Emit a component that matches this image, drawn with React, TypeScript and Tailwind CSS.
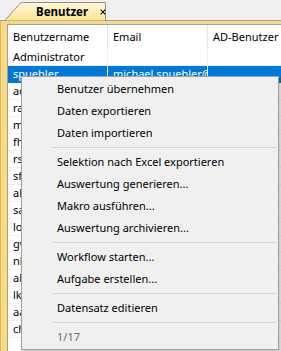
import React from 'react';

const rows = [
  { user: 'Administrator', email: '', ad: '' },
  { user: 'spuehler', email: 'michael.spuehler@firma.ch', ad: '' },
  { user: 'adoerig', email: 'andrea.doerig@firma.ch', ad: '' },
  { user: 'rarnold', email: 'ruth.arnold@firma.ch', ad: '' },
  { user: 'mmueller', email: 'marc.mueller@firma.ch', ad: '' },
  { user: 'fhuber', email: 'fabian.huber@firma.ch', ad: '' },
  { user: 'rschmid', email: 'reto.schmid@firma.ch', ad: '' },
  { user: 'sfrei', email: 'sandra.frei@firma.ch', ad: '' },
  { user: 'alang', email: 'anna.lang@firma.ch', ad: '' },
  { user: 'sammann', email: 'stefan.ammann@firma.ch', ad: '' },
  { user: 'lober', email: 'lukas.ober@firma.ch', ad: '' },
  { user: 'gweber', email: 'georg.weber@firma.ch', ad: '' },
  { user: 'nkeller', email: 'nina.keller@firma.ch', ad: '' },
  { user: 'albrecht', email: 'adrian.albrecht@firma.ch', ad: '' },
  { user: 'lkunz', email: 'lea.kunz@firma.ch', ad: '' },
  { user: 'aaebi', email: 'andreas.aebi@firma.ch', ad: '' },
  { user: 'chess', email: 'christian.hess@firma.ch', ad: '' },
];

type Entry = 'sep' | { label: string; disabled?: boolean };

const menu: Entry[] = [
  { label: 'Benutzer übernehmen' },
  { label: 'Daten exportieren' },
  { label: 'Daten importieren' },
  'sep',
  { label: 'Selektion nach Excel exportieren' },
  { label: 'Auswertung generieren...' },
  { label: 'Makro ausführen...' },
  { label: 'Auswertung archivieren...' },
  'sep',
  { label: 'Workflow starten...' },
  { label: 'Aufgabe erstellen...' },
  'sep',
  { label: 'Datensatz editieren' },
  'sep',
  { label: '1/17', disabled: true },
];

const Tab = () => (
  <div className="relative ml-[4px] mt-[2px] h-[19px] w-[102px] flex items-center">
    <svg className="absolute inset-0" width="102" height="19" viewBox="0 0 102 19">
      <defs>
        <linearGradient id="tabfill" x1="0" y1="0" x2="0" y2="1">
          <stop offset="0" stopColor="#fff8dc" />
          <stop offset="1" stopColor="#ffe592" />
        </linearGradient>
      </defs>
      <path d="M0.5 19 L16 1.5 Q17 0.5 18.5 0.5 L101.5 0.5 L101.5 19 Z" fill="url(#tabfill)" stroke="#8e8e8e" />
    </svg>
    <span className="relative pl-[32px] text-[11.5px] font-bold text-black leading-none">Benutzer</span>
    <svg className="relative ml-[12px]" width="9" height="8" viewBox="0 0 9 8">
      <path d="M1 0.5 L8 7.5 M8 0.5 L1 7.5" stroke="#000" strokeWidth="1.6" />
    </svg>
  </div>
);

export default function App() {
  return (
    <div
      className="relative w-[281px] h-[351px] overflow-hidden bg-[#f0f0f0] flex flex-col"
      style={{ fontFamily: '"Noto Sans", "Open Sans", sans-serif' }}
    >
      <div className="h-[21px] shrink-0 flex items-start border-b border-[#a0a0a0]">
        <div className="-mb-px">
          <Tab />
        </div>
      </div>
      <div className="flex-1 bg-[#f9da84] pt-[3px] pl-[6px] border-l border-[#e0b860] min-h-0 flex">
        <div className="flex-1 bg-white border-l border-t border-[#a0a0a0] text-[11px] text-black">
          <div className="flex h-[24px]">
            <div className="w-[100px] px-[5px] flex items-center whitespace-nowrap border-r border-[#e5e5e5]">Benutzername</div>
            <div className="w-[100px] px-[5px] flex items-center whitespace-nowrap border-r border-[#e5e5e5]">Email</div>
            <div className="flex-1 px-[5px] flex items-center whitespace-nowrap">AD-Benutzer</div>
          </div>
          {rows.map((r, i) => {
            const sel = i === 1;
            return (
              <div
                key={r.user}
                className={`flex h-[17px] border-b ${sel ? 'bg-[#0078d7] text-white border-[#0078d7]' : 'border-[#f0f0f0]'}`}
              >
                <div className={`w-[100px] px-[5px] flex items-center overflow-hidden whitespace-nowrap border-r ${sel ? 'border-white' : 'border-[#f0f0f0]'}`}>
                  {r.user}
                </div>
                <div className={`w-[100px] px-[5px] flex items-center overflow-hidden whitespace-nowrap border-r ${sel ? 'border-white' : 'border-[#f0f0f0]'}`}>
                  {r.email}
                </div>
                <div className="flex-1 px-[5px] flex items-center">{r.ad}</div>
              </div>
            );
          })}
        </div>
      </div>

      <div className="absolute left-[21px] top-[76px] w-[258px] bg-[#f0f0f0] border border-[#a0a0a0] pt-[1px] pb-[1px] shadow-[2px_2px_3px_rgba(0,0,0,0.25)] text-[11px]">
        {menu.map((m, i) =>
          m === 'sep' ? (
            <div key={i} className="h-[7px] flex items-center">
              <div className="ml-[30px] mr-[1px] flex-1 h-px bg-[#d5d5d5]" />
            </div>
          ) : (
            <div
              key={i}
              className={`h-[22px] pl-[35px] flex items-center whitespace-nowrap ${m.disabled ? 'text-[#6d6d6d]' : 'text-black'}`}
            >
              {m.label}
            </div>
          )
        )}
      </div>
    </div>
  );
}
